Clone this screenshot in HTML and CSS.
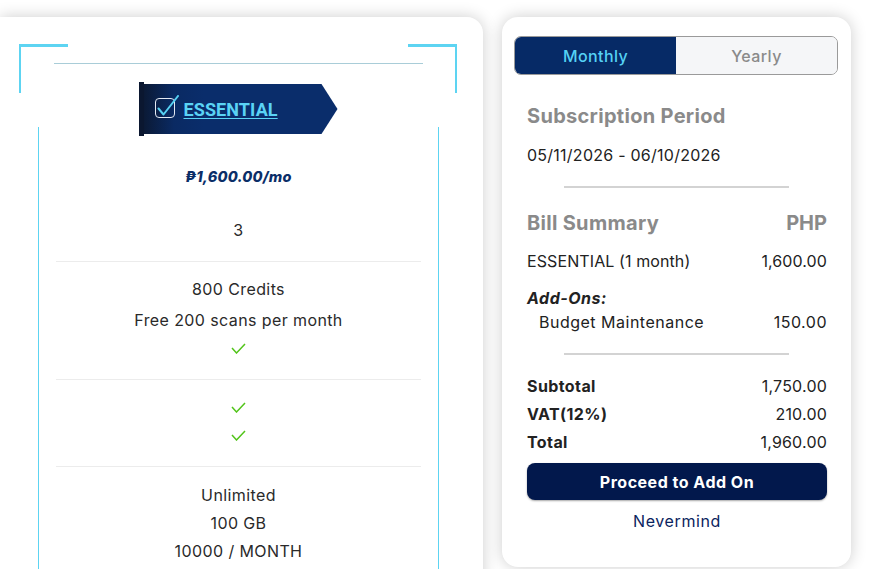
FILE: index.html
```html
<!DOCTYPE html>
<html lang="en">
<head>
<meta charset="utf-8">
<title>Plan checkout</title>
<link rel="stylesheet" href="styles.css">
</head>
<body>
<div class="page">
  <section class="plan-card">
    <div class="plan">
      <span class="corner corner-tl"></span>
      <span class="corner corner-tr"></span>
      <div class="topline"></div>
      <div class="banner-row">
        <div class="banner">
          <div class="banner-body">
            <svg class="banner-icon" width="24" height="26" viewBox="0 0 24 26" aria-hidden="true">
              <rect x="0.5" y="3.5" width="19" height="19" rx="3.5" fill="none" stroke="#e3e9f2" stroke-width="1"/>
              <path d="M3.5 13.5 L8.5 19.5 L23 1" fill="none" stroke="#56d0f2" stroke-width="2" stroke-linecap="round" stroke-linejoin="round"/>
            </svg>
            <a class="plan-name" href="#">ESSENTIAL</a>
          </div>
        </div>
      </div>
      <div class="features">
        <div class="price">₱1,600.00/mo</div>
        <div class="sec sec-first"><div class="ln">3</div></div>
        <div class="sec">
          <div class="ln">800 Credits</div>
          <div class="ln ln-gap">Free 200 scans per month</div>
          <div class="ln"><svg class="tick" width="15" height="11" viewBox="0 0 15 11"><path d="M1 5 L5.5 10 L14 1" fill="none" stroke="#52c41a" stroke-width="1.5"/></svg></div>
        </div>
        <div class="sec">
          <div class="ln"><svg class="tick" width="15" height="11" viewBox="0 0 15 11"><path d="M1 5 L5.5 10 L14 1" fill="none" stroke="#52c41a" stroke-width="1.5"/></svg></div>
          <div class="ln"><svg class="tick" width="15" height="11" viewBox="0 0 15 11"><path d="M1 5 L5.5 10 L14 1" fill="none" stroke="#52c41a" stroke-width="1.5"/></svg></div>
        </div>
        <div class="sec sec-last">
          <div class="ln">Unlimited</div>
          <div class="ln">100 GB</div>
          <div class="ln">10000 / MONTH</div>
        </div>
      </div>
    </div>
  </section>

  <aside class="summary">
    <div class="toggle">
      <button class="tog tog-active">Monthly</button>
      <button class="tog">Yearly</button>
    </div>
    <div class="sum-body">
      <h2 class="sum-title">Subscription Period</h2>
      <div class="period">05/11/2026 - 06/10/2026</div>
      <hr class="sep">
      <div class="row row-head">
        <h2 class="sum-title">Bill Summary</h2>
        <span class="currency">PHP</span>
      </div>
      <div class="row row-item">
        <span>ESSENTIAL (1 month)</span>
        <span>1,600.00</span>
      </div>
      <div class="addons">Add-Ons:</div>
      <div class="row row-addon">
        <span>Budget Maintenance</span>
        <span>150.00</span>
      </div>
      <hr class="sep sep-second">
      <div class="totals">
        <div class="row row-total"><strong>Subtotal</strong><span>1,750.00</span></div>
        <div class="row row-total"><strong>VAT(12%)</strong><span>210.00</span></div>
        <div class="row row-total"><strong>Total</strong><span>1,960.00</span></div>
      </div>
      <button class="proceed">Proceed to Add On</button>
      <div class="nevermind">Nevermind</div>
    </div>
  </aside>
</div>
</body>
</html>
```
FILE: styles.css
```css
* { box-sizing: border-box; }
html, body {
  margin: 0;
  padding: 0;
  background: #ffffff;
  overflow: hidden;
}
body {
  font-family: "Inter", "Open Sans", sans-serif;
  color: #222;
}
.page {
  display: flex;
  align-items: flex-start;
  gap: 19px;
  padding-top: 17px;
  height: 569px;
}

/* ---------- Left plan card ---------- */
.plan-card {
  width: 483px;
  height: 600px;
  flex: none;
  background: #fff;
  border-radius: 0 16px 0 0;
  box-shadow: 0 0 16px rgba(0, 0, 0, 0.2);
  padding-top: 27px;
}
.plan {
  position: relative;
  width: 438px;
  margin-left: 19px;
  padding-top: 19px;
}
.corner {
  position: absolute;
  top: 0;
  width: 49px;
  height: 49px;
  border-top: 3px solid #5dd4f2;
}
.corner-tl { left: 0; border-left: 2px solid #5dd4f2; }
.corner-tr { right: 0; border-right: 2px solid #5dd4f2; }
.topline {
  margin: 0 34px 0 35px;
  height: 1px;
  background: #a9cdd8;
}
.banner-row {
  display: flex;
  justify-content: center;
  margin-top: 18px;
  height: 45px;
}
.banner {
  position: relative;
  z-index: 1;
  width: 199px;
  height: 54px;
  border-left: 5px solid #0b1730;
  flex: none;
}
.banner-body {
  margin-top: 2px;
  height: 50px;
  width: 194px;
  display: flex;
  align-items: center;
  background: linear-gradient(90deg, #0b1a36 0px, #0a2a63 30px, #0a2d6b 60px, #0a2d6b 100%);
  clip-path: polygon(0 0, 178px 0, 100% 50%, 178px 100%, 0 100%);
}
.banner-icon {
  margin-left: 11px;
  margin-right: 5px;
  margin-top: -2px;
  flex: none;
}
.plan-name {
  font-family: "Roboto", "Liberation Sans", sans-serif;
  font-weight: 700;
  font-size: 18px;
  color: #5ad3f5;
  text-decoration: underline;
  text-underline-offset: 2px;
  letter-spacing: 0.1px;
}
.features {
  margin-left: 19px;
  width: 401px;
  height: 460px;
  border-left: 1px solid #5dd4f2;
  border-right: 1px solid #5dd4f2;
  padding: 0 17px 0 17px;
  text-align: center;
  font-size: 16px;
  letter-spacing: 0.4px;
  color: #2a2a2a;
}
.price {
  padding-top: 40px;
  line-height: 20px;
  font-weight: 800;
  font-style: italic;
  font-size: 14.5px;
  letter-spacing: 0.2px;
  color: #0b2e68;
}
.sec {
  padding: 13px 0 17px;
  border-bottom: 1px solid #ececec;
}
.sec-first { padding-top: 29px; }
.sec-last { border-bottom: none; padding-top: 14px; }
.ln {
  height: 28px;
  line-height: 28px;
  display: flex;
  align-items: center;
  justify-content: center;
}
.ln-gap { margin-top: 3px; }
.tick { display: block; }

/* ---------- Right summary card ---------- */
.summary {
  width: 349px;
  height: 550px;
  flex: none;
  background: #fff;
  border-radius: 16px;
  box-shadow: 0 0 16px rgba(0, 0, 0, 0.2);
  padding: 19px 13px 0 12px;
}
.toggle {
  display: flex;
  height: 39px;
  border: 1px solid #9a9a9a;
  border-radius: 7px;
  overflow: hidden;
}
.tog {
  flex: 1;
  border: none;
  margin: 0;
  font-family: inherit;
  font-size: 16px;
  font-weight: 500;
  letter-spacing: 0.4px;
  background: #f5f6f8;
  color: #8a8a8a;
}
.tog-active {
  background: #062a66;
  color: #55d2f5;
}
.sum-body {
  padding: 0 11px 0 13px;
}
.sum-title {
  margin: 0;
  font-size: 20px;
  line-height: 28px;
  font-weight: 700;
  letter-spacing: 0.3px;
  color: #8a8a8a;
}
.sum-body > .sum-title { margin-top: 27px; }
.period {
  margin-top: 13px;
  font-size: 16px;
  line-height: 24px;
  letter-spacing: 0.25px;
  color: #222;
}
.sep {
  border: none;
  height: 2px;
  background: #d3d3d3;
  margin: 19px 38px 0 37px;
}
.row {
  display: flex;
  justify-content: space-between;
  align-items: center;
}
.row-head { margin-top: 21px; }
.currency {
  font-size: 20px;
  line-height: 28px;
  font-weight: 700;
  color: #8a8a8a;
}
.row-item {
  margin-top: 12px;
  font-size: 16px;
  line-height: 24px;
  letter-spacing: 0.1px;
}
.addons {
  margin-top: 13px;
  font-size: 16px;
  line-height: 24px;
  font-weight: 700;
  font-style: italic;
  letter-spacing: 0.5px;
  color: #222;
}
.row-addon {
  padding-left: 12px;
  font-size: 16px;
  line-height: 24px;
  letter-spacing: 0.5px;
}
.totals { margin-top: 17px; }
.row-total {
  font-size: 16px;
  line-height: 28px;
  letter-spacing: 0.2px;
}
.row-total strong { font-weight: 700; color: #222; letter-spacing: 0.4px; }
.proceed {
  display: block;
  width: 100%;
  height: 37px;
  margin-top: 7px;
  border: none;
  border-radius: 8px;
  background: #02184c;
  color: #fff;
  font-family: inherit;
  font-size: 16px;
  font-weight: 700;
  letter-spacing: 0.5px;
  box-shadow: 0 1px 2px rgba(0, 0, 0, 0.35);
}
.nevermind {
  margin-top: 9px;
  text-align: center;
  font-size: 16px;
  line-height: 24px;
  letter-spacing: 0.6px;
  color: #0b2460;
}
```
